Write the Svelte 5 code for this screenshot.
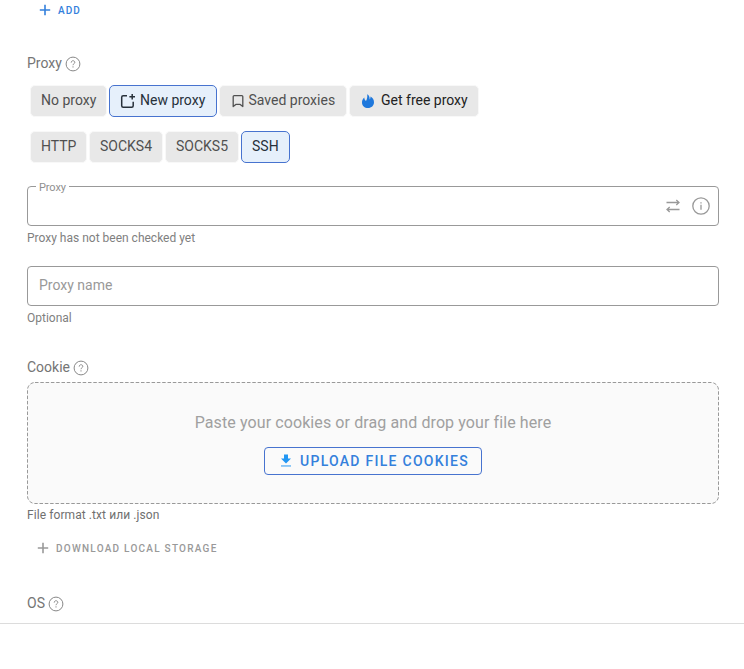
<script>
  let mode = $state('New proxy');
  let protocol = $state('SSH');
  const modes = [
    { name: 'No proxy', width: 77 },
    { name: 'New proxy', width: 108 },
    { name: 'Saved proxies', width: 128 },
    { name: 'Get free proxy', width: 130 }
  ];
  const protocols = [
    { name: 'HTTP', width: 57 },
    { name: 'SOCKS4', width: 74 },
    { name: 'SOCKS5', width: 74 },
    { name: 'SSH', width: 49 }
  ];
</script>

{#snippet help()}
  <svg class="help" width="16" height="16" viewBox="0 0 16 16" fill="none" stroke="currentColor">
    <circle cx="8" cy="8" r="6.9" />
    <path d="M6.2 6.6C6.2 4.1 9.8 4.2 9.8 6.4C9.8 7.7 8 7.7 8 9.2M8 10.3V11.5" />
  </svg>
{/snippet}

{#snippet plus()}
  <svg width="12" height="12" viewBox="0 0 12 12" fill="none" stroke="currentColor" stroke-width="1.6">
    <path d="M6 .8V11.2M.8 6H11.2" />
  </svg>
{/snippet}

<div class="page">
  <main>
    <button class="add">{@render plus()}<span>ADD</span></button>

    <div class="label proxy-label">Proxy {@render help()}</div>

    <div class="chips">
      {#each modes as m}
        <button class="chip" class:active={mode === m.name} class:free={m.name === 'Get free proxy'} style="width: {m.width}px" onclick={() => (mode = m.name)}>
          {#if m.name === 'New proxy'}
            <svg class="ic-new" width="16" height="16" viewBox="0 0 16 16" fill="none" stroke="currentColor" stroke-width="1.5">
              <path d="M7 2.8H3.2Q1.7 2.8 1.7 4.3V12.7Q1.7 14.2 3.2 14.2H11.7Q13.2 14.2 13.2 12.7V8.8M12.2 1V6.6M9.4 3.8H15" />
            </svg>
          {:else if m.name === 'Saved proxies'}
            <svg class="ic-saved" width="12" height="14" viewBox="0 0 12 14" fill="none" stroke="currentColor" stroke-width="1.3" stroke-linejoin="round">
              <path d="M1.2 2.6Q1.2 1.6 2.2 1.6H9.8Q10.8 1.6 10.8 2.6V12.5L8.2 10.4H3.8L1.2 12.5Z" />
            </svg>
          {:else if m.name === 'Get free proxy'}
            <svg class="ic-fire" width="14" height="16" viewBox="0 0 14 16" fill="#1f78dc">
              <path d="M6.2 1.2C7.9 2.1 8.8 3.9 8.7 6.4C9.4 5.7 9.6 4.8 9.4 3.6C11.6 4.7 13 6.8 13 9.2C13 12.6 10.4 15 7 15C3.6 15 1 12.7 1 9.4C1 7.5 1.8 5.8 3.3 4.6C3.3 6.1 3.8 7.3 5 7.9C6.2 6 6.5 3.8 6.2 1.2Z" />
            </svg>
          {/if}
          <span>{m.name}</span>
        </button>
      {/each}
    </div>

    <div class="chips protocols">
      {#each protocols as p}
        <button class="chip" class:active={protocol === p.name} style="width: {p.width}px" onclick={() => (protocol = p.name)}>
          <span>{p.name}</span>
        </button>
      {/each}
    </div>

    <div class="field proxy-field">
      <span class="legend">Proxy</span>
      <svg width="14" height="14" viewBox="0 0 14 14" fill="none" stroke="currentColor" stroke-width="1.3">
        <path d="M.5 3.5H13M10.3 1L13 3.5L10.3 6M13.5 10.5H1M3.7 8L1 10.5L3.7 13" />
      </svg>
      <svg width="18" height="18" viewBox="0 0 18 18" fill="none" stroke="currentColor" stroke-width="1.3">
        <circle cx="9" cy="9" r="8.2" />
        <path d="M9 7.7V12.8M9 5.2V6.5" />
      </svg>
    </div>
    <div class="hint">Proxy has not been checked yet</div>

    <div class="field name-field">Proxy name</div>
    <div class="hint">Optional</div>

    <div class="label cookie-label">Cookie {@render help()}</div>
    <div class="drop">
      <svg class="outline" width="692" height="122" fill="none">
        <rect x=".5" y=".5" width="691" height="121" rx="7.5" stroke="#999" stroke-dasharray="3.5 1.8" />
      </svg>
      <p>Paste your cookies or drag and drop your file here</p>
      <button class="upload">
        <svg width="12" height="14" viewBox="0 0 12 14" fill="#2196f3">
          <path d="M4 .5H8V4.5H11L6 9.5L1 4.5H4Z" />
          <path d="M1 11.3H11V12.6H1Z" opacity=".75" />
        </svg>
        <span>UPLOAD FILE COOKIES</span>
      </button>
    </div>
    <div class="hint dark">File format .txt или .json</div>

    <button class="download">{@render plus()}<span>DOWNLOAD LOCAL STORAGE</span></button>

    <div class="label os-label">OS {@render help()}</div>
  </main>
</div>

<style>
  :global(body) { background: #fff; overflow: hidden; }
  .page { height: 669px; font-family: Roboto, "Liberation Sans", sans-serif; color: #777; }
  main { box-sizing: border-box; height: 624px; padding: 0 25px 0 27px; border-bottom: 1px solid #dcdcdc; display: flex; flex-direction: column; }
  button { font-family: inherit; margin: 0; padding: 0; border: 0; background: none; display: flex; align-items: center; cursor: pointer; box-sizing: border-box; white-space: nowrap; }
  svg { display: block; flex: none; }
  .add { height: 20px; margin-left: 12px; color: #3480dc; font-size: 10px; font-weight: 500; letter-spacing: 1.1px; gap: 7px; }
  .label { display: flex; align-items: center; gap: 3px; height: 20px; font-size: 14px; color: #757575; }
  .help { margin-top: 2px; color: #888; }
  .proxy-label { margin-top: 33px; }
  .chips { display: flex; gap: 2px; margin: 12px 0 0 3px; height: 32px; }
  .protocols { margin-top: 14px; }
  .chip { height: 32px; padding: 0 0 2px 10px; border: 1px solid #f8f8f8; border-radius: 5px; background: #e8e8e8; color: #505050; font-size: 14px; }
  .chip svg { position: relative; top: 1px; }
  .chip.active { border-color: #4773cf; background: #e6f0fb; color: #27303a; }
  .chip.free { color: #222; }
  .ic-new { margin-right: 4px; }
  .ic-saved { margin: 0 5px 0 1.5px; }
  .ic-fire { margin: 0 6px 0 1px; }
  .field { position: relative; box-sizing: border-box; height: 40px; border: 1px solid #999; border-radius: 4px; display: flex; align-items: center; color: #999; font-size: 14px; }
  .proxy-field { margin-top: 23px; justify-content: flex-end; padding-right: 8px; gap: 12px; }
  .legend { position: absolute; left: 8px; top: -6px; padding: 0 3px; background: #fff; font-size: 11px; line-height: 14px; letter-spacing: -.1px; color: #909090; }
  .name-field { margin-top: 20px; padding: 0 11px 2px; }
  .hint { height: 20px; line-height: 24px; font-size: 12px; color: #808080; }
  .hint.dark { line-height: 22px; letter-spacing: .08px; color: #707070; }
  .cookie-label { margin-top: 31px; }
  .drop { position: relative; box-sizing: border-box; height: 122px; margin-top: 5px; padding-top: 31px; border-radius: 8px; background: #fafafa; display: flex; flex-direction: column; align-items: center; }
  .outline { position: absolute; left: 0; top: 0; }
  .drop p { margin: 0 0 14px; font-size: 16px; line-height: 20px; letter-spacing: .1px; color: #a0a0a0; }
  .upload { width: 218px; height: 28px; padding-left: 15px; border: 1px solid #4773cf; border-radius: 4px; color: #3480dc; font-size: 14px; font-weight: 500; letter-spacing: 1.27px; gap: 8px; }
  .download { height: 20px; margin: 14px 0 0 10px; color: #999; font-size: 10px; font-weight: 500; letter-spacing: 1.25px; gap: 7px; }
  .os-label { margin-top: 35px; }
</style>
